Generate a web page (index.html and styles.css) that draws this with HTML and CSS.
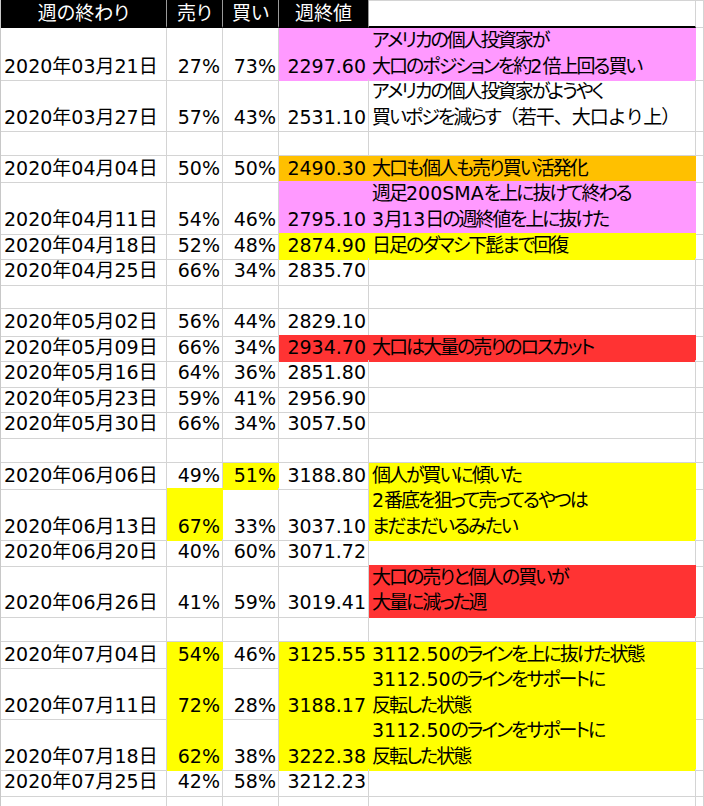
FILE: index.html
```html
<!DOCTYPE html>
<html lang="ja">
<head>
<meta charset="utf-8">
<title>週の終わり</title>
<link rel="stylesheet" href="styles.css">
</head>
<body>
<div class="sheet">
  <div class="row head">
    <div class="c h">週の終わり</div>
    <div class="c h">売り</div>
    <div class="c h">買い</div>
    <div class="c h">週終値</div>
    <div class="c hw"></div>
    <div class="c hx"></div>
  </div>

  <div class="row tall">
    <div class="c">2020年03月21日</div>
    <div class="c num">27%</div>
    <div class="c num">73%</div>
    <div class="c num pink">2297.60</div>
    <div class="c memo pink"><p class="t">アメリカの個人投資家が<br>大口のポジションを約<span class="lat">2</span>倍上回る買い</p></div>
    <div class="c"></div>
  </div>
  <div class="row tall">
    <div class="c">2020年03月27日</div>
    <div class="c num">57%</div>
    <div class="c num">43%</div>
    <div class="c num">2531.10</div>
    <div class="c memo"><p class="t">アメリカの個人投資家がようやく<br>買いポジを減らす<span class="paren">（若干、大口より上）</span></p></div>
    <div class="c"></div>
  </div>
  <div class="row">
    <div class="c"></div><div class="c"></div><div class="c"></div><div class="c"></div><div class="c"></div><div class="c"></div>
  </div>
  <div class="row">
    <div class="c">2020年04月04日</div>
    <div class="c num">50%</div>
    <div class="c num">50%</div>
    <div class="c num orange">2490.30</div>
    <div class="c memo orange"><p class="t">大口も個人も売り買い活発化</p></div>
    <div class="c"></div>
  </div>
  <div class="row tall">
    <div class="c">2020年04月11日</div>
    <div class="c num">54%</div>
    <div class="c num">46%</div>
    <div class="c num pink">2795.10</div>
    <div class="c memo pink"><p class="t">週足<span class="lat">200SMA</span>を上に抜けて終わる<br><span class="lat">3</span>月<span class="lat">13</span>日の週終値を上に抜けた</p></div>
    <div class="c"></div>
  </div>
  <div class="row">
    <div class="c">2020年04月18日</div>
    <div class="c num">52%</div>
    <div class="c num">48%</div>
    <div class="c num yellow">2874.90</div>
    <div class="c memo yellow"><p class="t">日足のダマシ下髭まで回復</p></div>
    <div class="c"></div>
  </div>
  <div class="row">
    <div class="c">2020年04月25日</div>
    <div class="c num">66%</div>
    <div class="c num">34%</div>
    <div class="c num">2835.70</div>
    <div class="c"></div>
    <div class="c"></div>
  </div>
  <div class="row">
    <div class="c"></div><div class="c"></div><div class="c"></div><div class="c"></div><div class="c"></div><div class="c"></div>
  </div>
  <div class="row">
    <div class="c">2020年05月02日</div>
    <div class="c num">56%</div>
    <div class="c num">44%</div>
    <div class="c num">2829.10</div>
    <div class="c"></div>
    <div class="c"></div>
  </div>
  <div class="row">
    <div class="c">2020年05月09日</div>
    <div class="c num">66%</div>
    <div class="c num">34%</div>
    <div class="c num red">2934.70</div>
    <div class="c memo red"><p class="t">大口は大量の売りのロスカット</p></div>
    <div class="c"></div>
  </div>
  <div class="row">
    <div class="c">2020年05月16日</div>
    <div class="c num">64%</div>
    <div class="c num">36%</div>
    <div class="c num">2851.80</div>
    <div class="c"></div>
    <div class="c"></div>
  </div>
  <div class="row">
    <div class="c">2020年05月23日</div>
    <div class="c num">59%</div>
    <div class="c num">41%</div>
    <div class="c num">2956.90</div>
    <div class="c"></div>
    <div class="c"></div>
  </div>
  <div class="row">
    <div class="c">2020年05月30日</div>
    <div class="c num">66%</div>
    <div class="c num">34%</div>
    <div class="c num">3057.50</div>
    <div class="c"></div>
    <div class="c"></div>
  </div>
  <div class="row">
    <div class="c"></div><div class="c"></div><div class="c"></div><div class="c"></div><div class="c"></div><div class="c"></div>
  </div>
  <div class="row">
    <div class="c">2020年06月06日</div>
    <div class="c num">49%</div>
    <div class="c num yellow">51%</div>
    <div class="c num">3188.80</div>
    <div class="c memo yellow"><p class="t">個人が買いに傾いた</p></div>
    <div class="c"></div>
  </div>
  <div class="row tall">
    <div class="c">2020年06月13日</div>
    <div class="c num yellow">67%</div>
    <div class="c num">33%</div>
    <div class="c num">3037.10</div>
    <div class="c memo yellow"><p class="t"><span class="lat">2</span>番底を狙って売ってるやつは<br>まだまだいるみたい</p></div>
    <div class="c"></div>
  </div>
  <div class="row">
    <div class="c">2020年06月20日</div>
    <div class="c num">40%</div>
    <div class="c num">60%</div>
    <div class="c num">3071.72</div>
    <div class="c"></div>
    <div class="c"></div>
  </div>
  <div class="row tall">
    <div class="c">2020年06月26日</div>
    <div class="c num">41%</div>
    <div class="c num">59%</div>
    <div class="c num">3019.41</div>
    <div class="c memo red"><p class="t">大口の売りと個人の買いが<br>大量に減った週</p></div>
    <div class="c"></div>
  </div>
  <div class="row">
    <div class="c"></div><div class="c"></div><div class="c"></div><div class="c"></div><div class="c"></div><div class="c"></div>
  </div>
  <div class="row">
    <div class="c">2020年07月04日</div>
    <div class="c num yellow">54%</div>
    <div class="c num">46%</div>
    <div class="c num yellow">3125.55</div>
    <div class="c memo yellow"><p class="t"><span class="lat">3112.50</span>のラインを上に抜けた状態</p></div>
    <div class="c"></div>
  </div>
  <div class="row tall">
    <div class="c">2020年07月11日</div>
    <div class="c num yellow">72%</div>
    <div class="c num">28%</div>
    <div class="c num yellow">3188.17</div>
    <div class="c memo yellow"><p class="t"><span class="lat">3112.50</span>のラインをサポートに<br>反転した状態</p></div>
    <div class="c"></div>
  </div>
  <div class="row tall">
    <div class="c">2020年07月18日</div>
    <div class="c num yellow">62%</div>
    <div class="c num">38%</div>
    <div class="c num yellow">3222.38</div>
    <div class="c memo yellow"><p class="t"><span class="lat">3112.50</span>のラインをサポートに<br>反転した状態</p></div>
    <div class="c"></div>
  </div>
  <div class="row">
    <div class="c">2020年07月25日</div>
    <div class="c num">42%</div>
    <div class="c num">58%</div>
    <div class="c num">3212.23</div>
    <div class="c"></div>
    <div class="c"></div>
  </div>
  <div class="row">
    <div class="c"></div><div class="c"></div><div class="c"></div><div class="c"></div><div class="c"></div><div class="c"></div>
  </div>
</div>
</body>
</html>
```
FILE: styles.css
```css
html, body {
  margin: 0;
  padding: 0;
  background: #ffffff;
}

body {
  font-family: "DejaVu Sans", "Noto Sans CJK JP", sans-serif;
  font-size: 19px;
  font-feature-settings: "palt" 1;
  color: #000000;
}

.sheet {
  width: 704px;
  height: 806px;
  overflow: hidden;
  border-left: 1px solid #c8c8c8;
  box-sizing: border-box;
}

.row {
  display: grid;
  grid-template-columns: 166px 56px 56px 90px 327px 1fr;
  height: 25.57px;
}

.row.tall {
  height: 51.13px;
}

.row.head {
  height: 28px;
}

.c {
  box-sizing: border-box;
  display: flex;
  align-items: flex-end;
  justify-content: flex-start;
  border-right: 1px solid #d4d4d4;
  border-bottom: 1px solid #d4d4d4;
  padding: 0 1px 1px 3px;
  line-height: 25.57px;
  white-space: nowrap;
}

.memo {
  letter-spacing: -2px;
}

.t {
  margin: 0;
}

.memo .lat {
  letter-spacing: 0;
}

.memo .paren {
  font-feature-settings: normal;
  letter-spacing: -1px;
}

.num {
  justify-content: flex-end;
  padding: 0 2px 1px 0;
}

.h {
  background: #000000;
  color: #ffffff;
  justify-content: center;
  align-items: center;
  padding: 0;
  line-height: 24px;
  border-right-color: #9a9a9a;
  border-bottom: 2px solid #000000;
}

.hw {
  border-top: 1px solid #d4d4d4;
  border-bottom: 2px solid #000000;
}

.hx {
  border-top: 1px solid #d4d4d4;
}

.pink {
  background: #ff99ff;
  border-color: #ff99ff;
}

.orange {
  background: #ffc000;
  border-color: #ffc000;
}

.yellow {
  background: #ffff00;
  border-color: #ffff00;
}

.red {
  background: #ff3333;
  border-color: #ff3333;
}
```
